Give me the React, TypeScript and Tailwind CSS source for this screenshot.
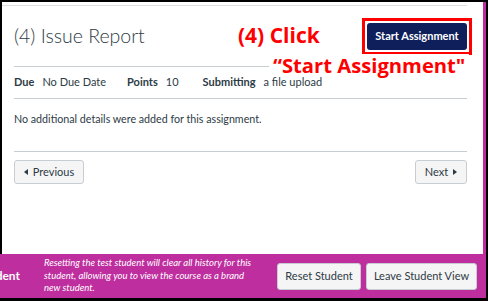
import React from 'react'

const purple = 'bg-[#be2e9e]'

function Caret({ dir }: { dir: 'left' | 'right' }) {
  return (
    <svg width="4" height="6" viewBox="0 0 4 6" className="shrink-0">
      {dir === 'left' ? <path d="M4 0 L0 3 L4 6 Z" fill="#2d3b45" /> : <path d="M0 0 L4 3 L0 6 Z" fill="#2d3b45" />}
    </svg>
  )
}

export default function App() {
  const details = [
    { label: 'Due', value: 'No Due Date', gap: '' },
    { label: 'Points', value: '10', gap: 'ml-[21px]' },
    { label: 'Submitting', value: 'a file upload', gap: 'ml-[24px]' },
  ]

  return (
    <div className="relative w-[488px] h-[301px] flex flex-col bg-white border-t-2 border-r-2 border-b-[3px] border-black font-['Lato','Liberation_Sans',sans-serif] text-[#2d3b45]">
      {/* assignment page */}
      <div className="flex-1 min-h-0 flex border-l-2 border-black">
        <div className="flex-1 pt-[3px] pr-[16px]">
          <div className="border-t border-[#dde1e3]">
            <div className="pl-3">
              <div className="h-[61px] flex items-center justify-between border-b border-[#c7cdd1]">
                <h1 className="text-[19.5px] font-light leading-none">(4) Issue Report</h1>
                {/* red highlight box from the tutorial */}
                <div className="-m-[5px] border-[3px] border-[#ff0000] p-[2px] bg-white">
                  <button className="block h-[27px] w-[100px] rounded-[3px] bg-[#0f1f5c] text-white text-[11px] font-bold">
                    Start Assignment
                  </button>
                </div>
              </div>

              <div className="h-[32px] flex items-center border-b border-[#c7cdd1] text-[11px]">
                {details.map((d) => (
                  <div key={d.label} className={`flex items-center gap-2 ${d.gap}`}>
                    <span className="font-bold">{d.label}</span>
                    <span>{d.value}</span>
                  </div>
                ))}
              </div>

              <div className="h-[53px] pt-[12px] border-b border-[#c7cdd1] text-[10.7px] leading-4">
                No additional details were added for this assignment.
              </div>

              <div className="mt-[8px] flex justify-between">
                <button className="h-[24px] w-[70px] flex items-center justify-center gap-[5px] rounded-[3px] border border-[#c7cdd1] bg-[#f5f5f5] text-[11px]">
                  <Caret dir="left" />
                  Previous
                </button>
                <button className="h-[24px] w-[52px] flex items-center justify-center gap-[5px] rounded-[3px] border border-[#c7cdd1] bg-[#f5f5f5] text-[11px]">
                  Next
                  <Caret dir="right" />
                </button>
              </div>
            </div>
          </div>
        </div>
        <div className={`w-[3px] ${purple}`} />
      </div>

      {/* student view bar */}
      <div className={`h-[44px] shrink-0 flex items-center ${purple} text-white`}>
        <div className="w-[20px] overflow-hidden flex justify-end">
          <span className="whitespace-nowrap text-[12px] font-bold">Student</span>
        </div>
        <p className="ml-[24px] text-[9.5px] italic leading-[12.5px] whitespace-nowrap">
          Resetting the test student will clear all history for this
          <br />
          student, allowing you to view the course as a brand
          <br />
          new student.
        </p>
        <div className="ml-auto mr-[9px] flex gap-[5px] text-[#2d3b45] text-[11px]">
          <button className="h-[27px] w-[84px] rounded-[3px] border border-[#c7cdd1] bg-[#f5f5f5]">Reset Student</button>
          <button className="h-[27px] w-[111px] rounded-[3px] border border-[#c7cdd1] bg-[#f5f5f5]">Leave Student View</button>
        </div>
      </div>

      {/* red tutorial annotation */}
      <div className="absolute left-[238px] top-[19px] text-[21px] leading-[28px] font-bold text-[#ff0000] font-['Open_Sans',sans-serif]">(4) Click</div>
      <div className="absolute left-[269px] top-[52px] px-1 bg-white text-[20.2px] leading-[22px] font-bold text-[#ff0000] whitespace-nowrap font-['Open_Sans',sans-serif]">
        “Start Assignment"
      </div>
    </div>
  )
}
